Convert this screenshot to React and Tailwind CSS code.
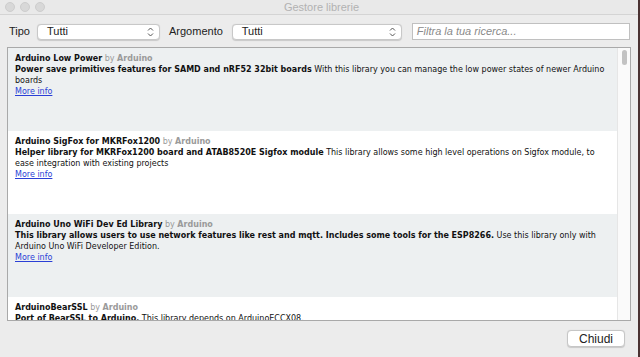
import React from "react";

const mono = { fontFamily: '"DejaVu Sans", Verdana, sans-serif' };

function Chevrons() {
  return (
    <svg width="7" height="10" viewBox="0 0 7 10" className="shrink-0">
      <path d="M1 3.5 L3.5 1 L6 3.5" fill="none" stroke="#555" strokeWidth="1" />
      <path d="M1 6.5 L3.5 9 L6 6.5" fill="none" stroke="#555" strokeWidth="1" />
    </svg>
  );
}

function Select({ width }) {
  return (
    <div
      className={`h-[16px] bg-white rounded-[4px] border border-[#c8c8c8] shadow-[0_0.5px_1px_rgba(0,0,0,0.15)] flex items-center pl-[9px] pr-[5px] justify-between ${width}`}
    >
      <span className="text-[11px] text-[#222] leading-none">Tutti</span>
      <Chevrons />
    </div>
  );
}

function Item({ bg, title, head, rest, lines }) {
  return (
    <div className={`h-[83px] shrink-0 pl-[7px] pt-[5px] ${bg}`}>
      <div className="text-[8px] leading-[11px] whitespace-nowrap text-[#111]" style={mono}>
        <div>
          <span className="font-bold">{title}</span>
          <span className="text-[#9a9a9a]"> by </span>
          <span className="font-bold text-[#9a9a9a]">Arduino</span>
        </div>
        <div>
          <span className="font-bold">{head}</span>
          {rest}
        </div>
        {lines.map((l, i) => (
          <div key={i}>{l}</div>
        ))}
        <div>
          <span className="text-[#2a3fd6] underline">More info</span>
        </div>
      </div>
    </div>
  );
}

export default function App() {
  return (
    <div className="w-[640px] h-[357px] flex bg-[#4a3232] overflow-hidden" style={{ fontFamily: '"Liberation Sans", Arial, sans-serif' }}>
      <div className="w-[638px] h-full bg-[#ececec] flex flex-col">
        {/* title bar */}
        <div className="h-[15px] shrink-0 bg-[#e9e9e9] border-b border-[#d4d4d4] flex items-center relative">
          <div className="flex gap-[5px] pl-[5px]">
            <div className="w-[10px] h-[10px] rounded-full bg-[#d8d8d8] border border-[#cdcdcd]" />
            <div className="w-[10px] h-[10px] rounded-full bg-[#d8d8d8] border border-[#cdcdcd]" />
            <div className="w-[10px] h-[10px] rounded-full bg-[#d8d8d8] border border-[#cdcdcd]" />
          </div>
          <div className="flex-1 text-center text-[11px] text-[#b2b2b2] leading-none pr-[40px]">Gestore librerie</div>
        </div>

        {/* toolbar */}
        <div className="h-[32px] shrink-0 flex items-center pl-[9px] pr-[8px] pt-[1px]">
          <span className="text-[11px] text-[#222]">Tipo</span>
          <div className="ml-[7px]">
            <Select width="w-[123px]" />
          </div>
          <span className="ml-[9px] text-[11px] text-[#222]">Argomento</span>
          <div className="ml-[9px]">
            <Select width="w-[170px]" />
          </div>
          <div className="ml-[10px] w-[218px] h-[17px] bg-white border border-[#c0c0c0] flex items-center pl-[4px]">
            <span className="text-[11px] italic text-[#8a8a8a] leading-none">Filtra la tua ricerca...</span>
          </div>
        </div>

        {/* list */}
        <div className="ml-[7px] w-[624px] h-[274px] shrink-0 border border-[#a9a9a9] bg-white flex overflow-hidden">
          <div className="flex-1 flex flex-col overflow-hidden">
            <Item
              bg="bg-[#edf0f1]"
              title="Arduino Low Power"
              head="Power save primitives features for SAMD and nRF52 32bit boards"
              rest=" With this library you can manage the low power states of newer Arduino"
              lines={["boards"]}
            />
            <Item
              bg="bg-white"
              title="Arduino SigFox for MKRFox1200"
              head="Helper library for MKRFox1200 board and ATAB8520E Sigfox module"
              rest=" This library allows some high level operations on Sigfox module, to"
              lines={["ease integration with existing projects"]}
            />
            <Item
              bg="bg-[#edf0f1]"
              title="Arduino Uno WiFi Dev Ed Library"
              head="This library allows users to use network features like rest and mqtt. Includes some tools for the ESP8266."
              rest=" Use this library only with"
              lines={["Arduino Uno WiFi Developer Edition."]}
            />
            <Item
              bg="bg-white"
              title="ArduinoBearSSL"
              head="Port of BearSSL to Arduino."
              rest=" This library depends on ArduinoECCX08."
              lines={[""]}
            />
          </div>
          <div className="w-[13px] shrink-0 bg-[#fafafa] border-l border-[#e6e6e6] flex justify-center pt-[2px]">
            <div className="w-[5px] h-[15px] rounded-full bg-[#c2c2c2]" />
          </div>
        </div>

        {/* footer */}
        <div className="flex-1 flex justify-end items-start pt-[9px] pr-[13px]">
          <div className="w-[58px] h-[17px] bg-white rounded-[4px] border border-[#c6c6c6] shadow-[0_0.5px_1px_rgba(0,0,0,0.15)] flex items-center justify-center text-[12px] text-[#222] leading-none">
            Chiudi
          </div>
        </div>
      </div>
      <div className="flex-1 bg-[#4a3232]" />
    </div>
  );
}
